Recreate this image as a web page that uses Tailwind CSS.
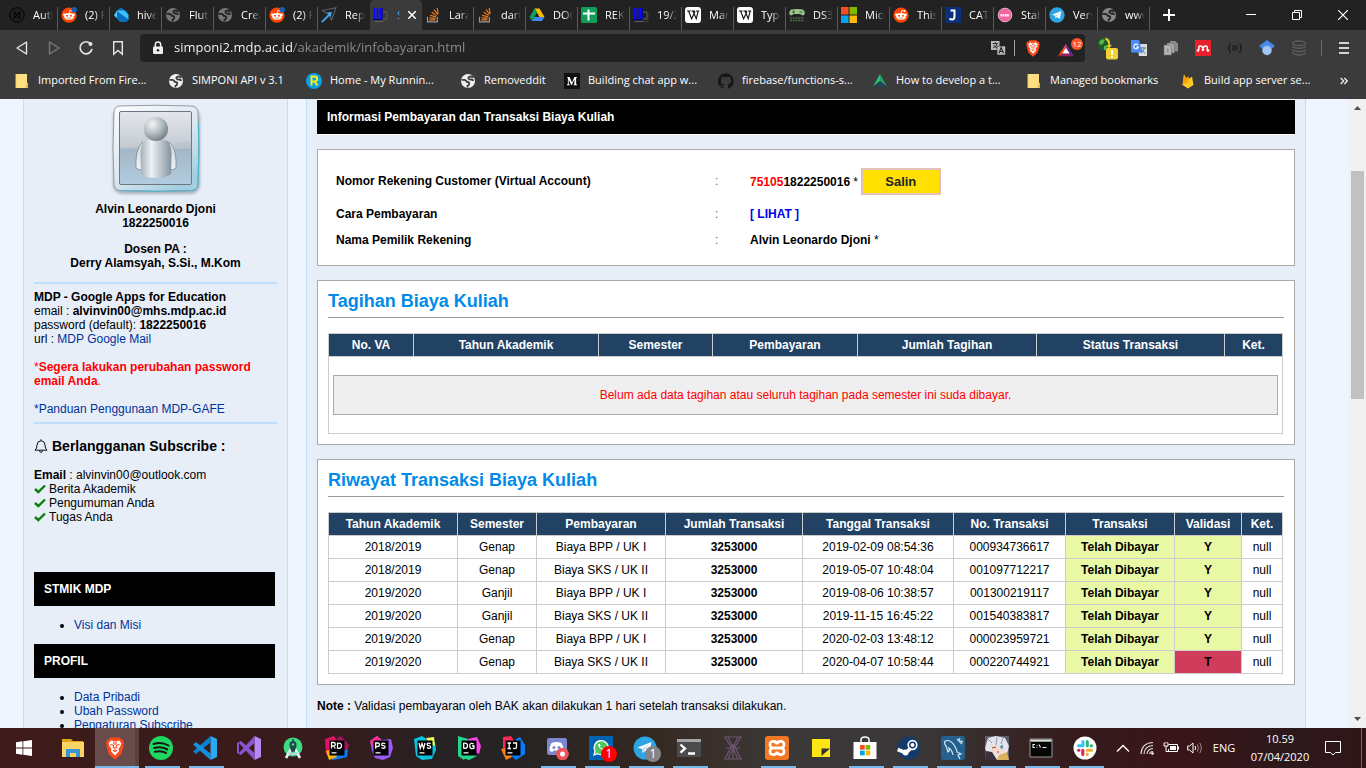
<!DOCTYPE html>
<html lang="id">
<head>
<meta charset="utf-8">
<title>Informasi Pembayaran - SIMPONI</title>
<script src="https://cdn.jsdelivr.net/npm/@tailwindcss/browser@4"></script>
</head>
<body class="flex h-screen flex-col overflow-hidden bg-[#f0f4fd] font-['Liberation_Sans',Arial,sans-serif] text-xs text-black">

<!-- shared icon symbols -->
<svg class="hidden" aria-hidden="true">
  <symbol id="globe" viewBox="0 0 16 16"><circle cx="8" cy="8" r="7" fill="currentColor"/><path d="M1.500 6.800h2.800q1.500.2 2 1.400.4 1 1.900 1 1.300.2 1 1.600-.2 1.500-1.700 2v1.700M13.500 4.500q-2-1.500-4.200-.7-1.600.9-.5 2.100 1 .8 2.700.6 1.500 0 1.500 1.500" fill="none" stroke="var(--cut)" stroke-width="1.800"/></symbol>
  <symbol id="reddit" viewBox="0 0 16 16"><circle cx="8" cy="8.200" r="7.600" fill="#ff4500"/><ellipse cx="8" cy="9.400" rx="4.800" ry="3.300" fill="#fff"/><circle cx="3.400" cy="7.800" r="1.300" fill="#fff"/><circle cx="12.600" cy="7.800" r="1.300" fill="#fff"/><circle cx="6" cy="8.700" r=".95" fill="#ff4500"/><circle cx="10" cy="8.700" r=".95" fill="#ff4500"/><path d="M6 10.800q2 1.200 4 0" fill="none" stroke="#ff4500" stroke-width=".7"/><path d="M8.200 6.200l.7-2.800 2.300.6" fill="none" stroke="#fff" stroke-width=".8"/><circle cx="11.600" cy="4" r=".9" fill="#fff"/></symbol>
  <symbol id="stack" viewBox="0 0 16 16"><path d="M2.500 9.800v5h9.800v-5" fill="none" stroke="#9a9a9a" stroke-width="1.200"/><path d="M4.400 12.900h6M4.500 10.700l6 .7M5.100 8.200l5.800 1.700M6.700 5.300l5 3.300M9 2.600l3.700 4.800M12.200 1l1 5.800" stroke="#f48024" stroke-width="1.100"/></symbol>
  <symbol id="simponi" viewBox="0 0 16 16"><path d="M.5 1h2v11h-2zM3.500 1h2v11h-2zM6.500 1h2v11h-2z" fill="#0a0aff"/><path d="M0 12.500h9M9.200 1v11" fill="none" stroke="#0000a0"/><path d="M10 5h4v7h-4M1.500 14.500h9" fill="none" stroke="#626262"/><path d="M11 14.500h4v-9" fill="none" stroke="#3c3c3c"/></symbol>
  <symbol id="wiki" viewBox="0 0 16 16"><rect width="16" height="16" rx="3" fill="#fff"/><path d="M2 4h3.600M6.400 4H10M11 4h3.200M3.600 4l3 7.800L10 4.600M8 4l3.200 7.800L13.200 4" fill="none" stroke="#111" stroke-width="1.100"/></symbol>
  <symbol id="brave" viewBox="0 0 20 24"><path d="M5.500 1.500h9l2 2 1.500.3 1 3.400-.8 2 .3 1.200-2.500 8L10 23.500l-6-5.100-2.500-8 .3-1.200-.8-2L2 3.800l1.500-.3z" fill="#fb4b1c"/><path d="M6 4.500l4 .8 4-.8 2.200 2.600-.5 2.500-2.200 3.400.5 2.300L10 19.500l-4-4.200.5-2.300-2.200-3.400-.5-2.500z" fill="#fff"/><path d="M5.300 8.500l3 .8.500 1.500-1 1.500M14.700 8.500l-3 .8-.5 1.500 1 1.500M8.500 5.500l1 3M11.500 5.500l-1 3M7.800 14.300l2.200 1.200 2.200-1.200M10 11v3.500" fill="none" stroke="#fb4b1c" stroke-width="1.100"/></symbol>
  <symbol id="folder" viewBox="0 0 16 16"><path d="M2 1h11v9h1v5H2z" fill="#fee083"/><path d="M12 10.500h2V15h-2.500z" fill="#e9bd4a"/><path d="M2 1v14" stroke="#f3ce62"/></symbol>
  <symbol id="telegram" viewBox="0 0 24 24"><circle cx="12" cy="12" r="11.500" fill="#2ca5e0"/><path d="M4.500 11.600L18.500 6l-2.300 12-4.200-3.100-2.300 2.200-.6-4.100z" fill="#fff"/><path d="M9.100 13l7.500-5-5.300 6.300-1.600 2.800z" fill="#b9dcf0"/></symbol>
  <symbol id="check" viewBox="0 0 12 12"><path d="M1 6l3.300 3L11 2.500" fill="none" stroke="#0a820a" stroke-width="2.400"/></symbol>
</svg>

<!-- tab strip -->
<header class="flex h-[30px] shrink-0 bg-[#222] pl-1.5 font-['Open_Sans',sans-serif] text-[11px] text-white">
  <nav aria-label="Tabs" class="flex [&>a]:flex [&>a]:h-[30px] [&>a]:w-[52px] [&>a]:shrink-0 [&>a]:items-center [&>a]:gap-2 [&>a]:pl-[3px] [&>a]:bg-[linear-gradient(#5a5a5a,#5a5a5a)] [&>a]:bg-[length:1px_23px] [&>a]:bg-[position:right_bottom] [&>a]:bg-no-repeat [&_svg]:size-4 [&_svg]:shrink-0 [&_span]:w-5 [&_span]:overflow-hidden [&_span]:whitespace-nowrap [&_span]:mask-r-from-50%">
    <a href="#"><svg viewBox="0 0 16 16"><circle cx="8" cy="8" r="7.300" fill="#1f1f1f" stroke="#050505"/><path d="M4.500 4l7 8M11.500 4l-7 8M5.500 4v8M10.500 4v8" stroke="#050505" stroke-width="1.100"/></svg><span>Auth</span></a>
    <a href="#"><svg viewBox="0 0 16 16"><use href="#reddit"/><circle cx="13.200" cy="2.800" r="2.700" fill="#0d63b8"/></svg><span>(2) Fl</span></a>
    <a href="#"><svg viewBox="0 0 16 16"><path d="M4 3.500L8 .5l6 4 1.500 8-2 2.500H7L1 8.500z" fill="#0b6fc0"/><path d="M4 3.500h7l4.500 4v5L4 4z" fill="#3fc1f5"/><path d="M1 8.500l3-5v7.500z" fill="#55ccf8"/></svg><span>hive</span></a>
    <a href="#"><svg class="text-[#777] [--cut:#222]"><use href="#globe"/></svg><span>Flutt</span></a>
    <a href="#"><svg class="text-[#777] [--cut:#222]"><use href="#globe"/></svg><span>Crea</span></a>
    <a href="#"><svg viewBox="0 0 16 16"><use href="#reddit"/><circle cx="13.200" cy="2.800" r="2.700" fill="#0d63b8"/></svg><span>(2) Fl</span></a>
    <a href="#" class="bg-none!"><svg viewBox="0 0 16 16"><path d="M1.500 3.500L15 .8l-4.500 12-2.500-5z" fill="none" stroke="#59636b" stroke-width="1.100"/><path d="M.8 15.200L9 7" stroke="#46a6ee" stroke-width="1.800"/><path d="M10.800 4.800L5.800 5.800l4 4z" fill="#46a6ee"/></svg><span>Repl</span></a>
    <a href="#" aria-current="page" class="rounded-t bg-[#3b3b3b] bg-none!"><svg><use href="#simponi"/></svg><span class="w-[3px]! text-[#4aa8ff]">S</span><svg class="size-2!" viewBox="0 0 8 8"><path d="M0 0l8 8M8 0L0 8" stroke="#fff" stroke-width="1.500"/></svg></a>
    <a href="#"><svg><use href="#stack"/></svg><span>Lara</span></a>
    <a href="#"><svg><use href="#stack"/></svg><span>dart</span></a>
    <a href="#"><svg viewBox="0 0 16 16"><path d="M5.500 1.500h5l5 8.500h-5z" fill="#fbbc05"/><path d="M5.500 1.500L.5 10 3 14l5-8.500z" fill="#0f9d58"/><path d="M5.500 10h10L13 14H3z" fill="#4285f4"/></svg><span>DOC</span></a>
    <a href="#"><svg viewBox="0 0 16 16"><rect width="16" height="16" rx="1.500" fill="#109d58"/><path d="M7.500 2.500v11M2 6.500h12" stroke="#fff" stroke-width="2"/></svg><span>REKA</span></a>
    <a href="#"><svg><use href="#simponi"/></svg><span>19/2</span></a>
    <a href="#"><svg><use href="#wiki"/></svg><span>Mar</span></a>
    <a href="#"><svg><use href="#wiki"/></svg><span>Type</span></a>
    <a href="#"><svg viewBox="0 0 16 16"><path d="M2 2.500q6-1 12 0 2 1.500 1.500 5l-1.500 1-3-1.500H5L2 8.500.5 7.500Q0 4 2 2.500z" fill="#9cc78b"/><path d="M3 5h3M4.500 3.500v3M10.500 5h3" stroke="#3f6338"/><path d="M1 11h14M1 13.500h14" stroke="#4a6b42" stroke-width="1.500" stroke-dasharray="2 .7"/></svg><span>DS3</span></a>
    <a href="#"><svg viewBox="0 0 16 16"><path d="M0 0h7.500v7.500H0z" fill="#f25022"/><path d="M8.500 0H16v7.500H8.500z" fill="#7fba00"/><path d="M0 8.500h7.500V16H0z" fill="#00a4ef"/><path d="M8.500 8.500H16V16H8.500z" fill="#ffb900"/></svg><span>Micr</span></a>
    <a href="#"><svg><use href="#reddit"/></svg><span>This</span></a>
    <a href="#"><svg viewBox="0 0 16 16"><path d="M0 0h16v16H0z" fill="#0a2f7d"/><path d="M5.500 3.500h5M9.500 3v6.500q0 3-2.500 3-1.500 0-2.500-1" fill="none" stroke="#fff" stroke-width="2"/></svg><span>CATA</span></a>
    <a href="#"><svg viewBox="0 0 16 16"><circle cx="8" cy="8" r="6.800" fill="#f0659f" stroke="#e9b3cb"/><path d="M3.500 8.200h9" stroke="#fff" stroke-width="2.600" stroke-dasharray="1.600 .6"/></svg><span>Stab</span></a>
    <a href="#"><svg><use href="#telegram"/></svg><span>Vers</span></a>
    <a href="#"><svg class="text-[#888] [--cut:#222]"><use href="#globe"/></svg><span>www</span></a>
  </nav>
  <button aria-label="New tab" class="grid w-[38px] place-items-center"><svg class="size-3" viewBox="0 0 12 12"><path d="M6 0v12M0 6h12" stroke="#fff" stroke-width="2"/></svg></button>
  <div class="ml-auto flex [&>button]:grid [&>button]:w-[46px] [&>button]:place-items-center [&_svg]:size-[10px]">
    <button aria-label="Minimize"><svg viewBox="0 0 10 10"><path d="M0 4.500h10" stroke="#fff"/></svg></button>
    <button aria-label="Restore"><svg viewBox="0 0 10 10"><path d="M.5 2.500h7v7h-7zM2.500 2.500v-2h7v7h-2" fill="none" stroke="#fff"/></svg></button>
    <button aria-label="Close window"><svg viewBox="0 0 10 10"><path d="M0 0l10 10M10 0L0 10" stroke="#fff" stroke-width="1.200"/></svg></button>
  </div>
</header>

<!-- toolbar -->
<div class="flex h-8 shrink-0 items-center bg-[#3b3b3b] px-1.5 pt-1 font-['Open_Sans',sans-serif] text-white [&>button]:grid [&>button]:h-7 [&>button]:w-8 [&>button]:shrink-0 [&>button]:place-items-center">
  <button aria-label="Back"><svg class="size-4" viewBox="0 0 16 16"><path d="M12.500 2v12L3 8z" fill="none" stroke="#e6e6e6" stroke-width="1.400" stroke-linejoin="round"/></svg></button>
  <button aria-label="Forward"><svg class="size-4" viewBox="0 0 16 16"><path d="M3.500 2v12L13 8z" fill="none" stroke="#7a7a7a" stroke-width="1.400" stroke-linejoin="round"/></svg></button>
  <button aria-label="Reload"><svg class="size-4" viewBox="0 0 16 16"><path d="M12.800 4A6 6 0 1 0 14 9" fill="none" stroke="#e6e6e6" stroke-width="1.700"/><circle cx="12.500" cy="4" r="2" fill="#e6e6e6"/></svg></button>
  <button aria-label="Bookmark"><svg class="size-4" viewBox="0 0 16 16"><path d="M3.700 1.700h8.600v12.500L8 10.500l-4.300 3.700z" fill="none" stroke="#e6e6e6" stroke-width="1.400"/></svg></button>
  <div class="mx-1.5 flex h-7 min-w-0 flex-1 items-center rounded bg-[#222] pl-3">
    <svg class="mr-2.5 h-3.5 w-3 shrink-0" viewBox="0 0 12 14"><path d="M3.300 6V3.700a2.700 2.700 0 0 1 5.400 0V6" fill="none" stroke="#eee" stroke-width="1.500"/><rect x="1" y="5.500" width="10" height="7.500" rx="1" fill="#eee"/><circle cx="6" cy="9.200" r="1.200" fill="#222"/></svg>
    <input aria-label="Address" value="simponi2.mdp.ac.id/akademik/infobayaran.html" class="min-w-0 flex-1 bg-[linear-gradient(to_right,#fff_119px,#8f8f8f_119px)] bg-clip-text text-[13px] text-transparent outline-none">
    <button aria-label="Translate page" class="mr-2"><svg class="size-4" viewBox="0 0 16 16"><path d="M1 1h8.500v9H1z" fill="#bcbcbc"/><path d="M2.500 3.500h5.500M5.200 2v1.500M3 8q3.500-1.500 4-4.500M3.500 5q1.500 2.500 4 3" stroke="#222" fill="none" stroke-width=".9"/><path d="M7 6h8.500v9H7z" fill="#bcbcbc" stroke="#222" stroke-width=".6"/><path d="M9 13.200l2.200-5.700 2.300 5.700M9.800 11.500h2.900" fill="none" stroke="#222" stroke-width="1.100"/></svg></button>
    <div class="h-4 w-px bg-[#a0a0a0]"></div>
    <button aria-label="Brave Shields" class="ml-2.5"><svg class="h-[18px] w-4" viewBox="0 0 20 24"><use href="#brave"/></svg></button>
    <button aria-label="Brave Rewards, 12" class="relative mr-2 ml-4 h-7 w-5"><svg class="mt-1 h-4 w-[18px]" viewBox="0 0 20 16"><path d="M10 1L1 15l9-5z" fill="#ff4724"/><path d="M1 15h18l-9-4z" fill="#9e1f63"/><path d="M10 1l9 14-9-4z" fill="#662d91"/><path d="M10 5.500l4 6.500H6z" fill="#fff"/></svg><span class="absolute top-1 -right-1.5 grid size-3 place-items-center rounded-full bg-[#fb542b] text-[8px] leading-none">12</span></button>
  </div>
  <button aria-label="Download manager"><svg class="h-6 w-[22px]" viewBox="0 0 22 24"><circle cx="8" cy="8" r="6.500" fill="#1d5a2c"/><path d="M3 6q3-4 6-2l-2 4-3 1zM8 10l4-1-2 5H8z" fill="#57b848"/><path d="M10 1.500q5 2 4 7.500l2-.3-3 4-2.500-3.500 1.800.1q0-4-3.300-6z" fill="#e6c61f"/><rect x="10" y="12" width="12" height="11.500" rx="2" fill="#f2d230"/><path d="M16 14v5M16 20v2" stroke="#fff" stroke-width="1.800"/></svg></button>
  <button aria-label="Google Translate"><svg class="size-4" viewBox="0 0 16 16"><path d="M6 4h10v12H8z" fill="#dcdcdc"/><path d="M9 8h6M12 7v1M9.500 13q3.500-2 4-5M10.500 9.500q1.500 3 4 4" stroke="#607d8b" fill="none"/><path d="M0 0h8l3.500 12.500H1L0 12z" fill="#4b8bf4"/><path d="M7 5.200A2.300 2.300 0 1 0 7.300 7H5" fill="none" stroke="#fff" stroke-width="1.100"/></svg></button>
  <button aria-label="Copy tabs"><svg class="size-4" viewBox="0 0 16 16"><path d="M7 1h5l3 2.500v8H7z" fill="#8b8b8b"/><path d="M4 3h5l2.500 2.500V13H4z" fill="#a4a4a4" stroke="#6c6c6c" stroke-width=".6"/><path d="M1 5h5l2.500 2.500V15H1z" fill="#b5b5b5" stroke="#6c6c6c" stroke-width=".6"/><path d="M4.800 8.500v4" stroke="#777"/></svg></button>
  <button aria-label="Mendeley"><svg class="size-4" viewBox="0 0 16 16"><path d="M0 0h16v16H0z" fill="#e8202e"/><path d="M3.800 10.200V7.300q.2-1.800 2-1.300Q7.600 6.800 8 8q.4-1.200 2.200-2 1.800-.5 2 1.300v2.900" fill="none" stroke="#fff" stroke-width="1.500"/><circle cx="3" cy="10.500" r="1.300" fill="#fff"/><circle cx="8" cy="9.800" r="1.300" fill="#fff"/><circle cx="13" cy="10.500" r="1.300" fill="#fff"/></svg></button>
  <button aria-label="JSON viewer"><svg class="size-4" viewBox="0 0 16 16"><path d="M4 3.500q-1.500 0-1.500 2T1.300 8q1.200.5 1.200 2.500t1.500 2M12 3.500q1.500 0 1.500 2T14.700 8q-1.200.5-1.200 2.500t-1.500 2M5 6h6M5 8h6M5 10h6" fill="none" stroke="#181818" stroke-width="1.200"/></svg></button>
  <button aria-label="Google Scholar"><svg class="size-4" viewBox="0 0 16 16"><path d="M8 0l8 6-3.500 3h-9L0 6z" fill="#4a89e8"/><circle cx="8" cy="10.500" r="4.700" fill="#a3c6f9"/></svg></button>
  <button aria-label="Database"><svg class="size-4" viewBox="0 0 16 16"><g fill="none" stroke="#5c5c5c" stroke-width="1.400"><ellipse cx="8" cy="3.300" rx="6.500" ry="2.300"/><path d="M1.500 6q1 2.300 6.500 2.300T14.500 6M1.500 9.300q1 2.300 6.500 2.300t6.500-2.300M1.500 12.300q1 2.700 6.500 2.700t6.500-2.700"/></g></svg></button>
  <div class="ml-1.5 h-4 w-px shrink-0 bg-[#6a6a6a]"></div>
  <button aria-label="Menu" class="ml-1.5"><svg class="h-3.5 w-[10px]" viewBox="0 0 10 14"><path d="M0 2h10M0 7h10M0 12h10" stroke="#d4d4d4" stroke-width="2"/></svg></button>
</div>

<!-- bookmarks -->
<nav aria-label="Bookmarks" class="flex h-[37px] shrink-0 items-center bg-[#3b3b3b] pl-3.5 font-['Open_Sans',sans-serif] text-[11px] text-white [&>a]:flex [&>a]:w-[154px] [&>a]:shrink-0 [&>a]:items-center [&>a]:gap-2 [&>a]:whitespace-nowrap [&>a>svg]:size-4 [&_svg]:shrink-0">
  <a href="#"><svg><use href="#folder"/></svg>Imported From Fire...</a>
  <a href="#" class="w-[138px]!"><svg class="text-[#f0f0f0] [--cut:#3b3b3b]"><use href="#globe"/></svg>SIMPONI API v 3.1</a>
  <a href="#"><svg viewBox="0 0 16 16"><circle cx="8" cy="8" r="8" fill="#0b9fe8"/><path d="M5.500 12.500v-9H9q2.200.3 2.200 2.400T9 8.400H5.500M8.500 8.400l3 4.100" fill="none" stroke="#f7ef1a" stroke-width="2"/></svg>Home - My Runnin...</a>
  <a href="#" class="w-[104px]!"><svg class="text-[#f0f0f0] [--cut:#3b3b3b]"><use href="#globe"/></svg>Removeddit</a>
  <a href="#"><svg viewBox="0 0 16 16"><path d="M0 0h16v16H0z" fill="#111"/><path d="M3 4h2.500L8 9.500 10.400 4H13v.6l-.9.500v6l.9.600v.5H9.500v-.5l.9-.6V6.300l-2.700 5.900h-.3L4.700 6.500v4.300l1 1v.4H2.900v-.4l1-1V5.300z" fill="#fff"/></svg>Building chat app w...</a>
  <a href="#"><svg viewBox="0 0 16 16"><path d="M8 .2a8 8 0 0 0-2.500 15.600c.4.100.5-.2.500-.4v-1.500c-2.200.5-2.700-1-2.700-1-.4-.9-.9-1.200-.9-1.200-.7-.5.1-.5.100-.5.800.1 1.200.8 1.200.8.700 1.300 1.900.9 2.300.7.100-.5.300-.9.500-1.100-1.800-.2-3.600-.9-3.600-4 0-.9.300-1.600.8-2.100-.1-.2-.4-1 .1-2.100 0 0 .7-.2 2.200.8a7.500 7.500 0 0 1 4 0c1.500-1 2.200-.8 2.200-.8.4 1.100.2 1.900.1 2.100.5.600.8 1.300.8 2.100 0 3.100-1.900 3.800-3.700 4 .3.300.6.800.6 1.500v2.200c0 .2.100.5.500.4A8 8 0 0 0 8 .2" fill="#15181b"/></svg>firebase/functions-s...</a>
  <a href="#"><svg viewBox="0 0 16 16"><path d="M8 1l7 12.500L8 8z" fill="#1da462"/><path d="M8 1L1 13.500 8 8z" fill="#2bbf74"/><path d="M8 8.500l7 5H1z" fill="#21425a"/></svg>How to develop a t...</a>
  <a href="#"><svg><use href="#folder"/></svg>Managed bookmarks</a>
  <a href="#"><svg viewBox="0 0 16 16"><path d="M2.500 12L4 1.500l2.700 4.200L8 3.500l1.500 2.300L12 3.500 13.500 12 8 15.500z" fill="#ffca28"/><path d="M2.500 12L4 1.500l4 7.500zM2.500 12L8 3.500l1.600 2.400z" fill="#ffa000"/></svg>Build app server se...</a>
  <button aria-label="More bookmarks" class="mr-[18px] ml-auto"><svg class="size-2" viewBox="0 0 8 8"><path d="M.7 1l3 3-3 3M4.300 1l3 3-3 3" fill="none" stroke="#eee" stroke-width="1.300"/></svg></button>
</nav>

<!-- web page -->
<div class="flex min-h-0 flex-1">
  <div class="flex min-w-0 flex-1 overflow-hidden bg-[#f0f4fd] pr-[43px] pl-[23px]">

    <aside class="w-[265px] shrink-0 border-x border-[#bfdffb] bg-[#e7eef8] px-2.5 leading-[14px] [&_a]:text-[#003399]">
      <svg class="mx-auto mt-1 size-24" viewBox="0 0 96 96" role="img" aria-label="Foto profil">
        <defs>
          <linearGradient id="frame" x1="0" y1="0" x2=".7" y2="1"><stop offset="0" stop-color="#fdfdfe"/><stop offset=".6" stop-color="#dbe6ee"/><stop offset="1" stop-color="#a5cfe0"/></linearGradient>
          <linearGradient id="glass" x1="0" y1="0" x2="0" y2="1"><stop offset="0" stop-color="#e4e6ec"/><stop offset=".5" stop-color="#c3c9d1"/><stop offset=".52" stop-color="#a9b9c7"/><stop offset="1" stop-color="#b9d4e6"/></linearGradient>
          <radialGradient id="head" cx=".35" cy=".3" r=".75"><stop offset="0" stop-color="#f4f6f7"/><stop offset=".5" stop-color="#b9c1c7"/><stop offset="1" stop-color="#6f7d87"/></radialGradient>
          <linearGradient id="torso"><stop offset="0" stop-color="#a3b0b9"/><stop offset=".35" stop-color="#eff2f4"/><stop offset="1" stop-color="#84929d"/></linearGradient>
          <linearGradient id="arm" x1="0" y1="0" x2="0" y2="1"><stop offset="0" stop-color="#d0d7dc"/><stop offset="1" stop-color="#eef2f5"/></linearGradient>
          <filter id="soft"><feGaussianBlur stdDeviation="1.600"/></filter>
        </defs>
        <rect x="5" y="5" width="87" height="86" rx="9" fill="#7d8794" opacity=".6" filter="url(#soft)"/>
        <path d="M11 3Q48 1.500 84 3q5 .5 6 6 1.500 36 0 73-.7 5-6 5.500Q48 89 12 87.500q-5-.5-6-5.500-2-37 0-73 .5-5.500 5-6z" fill="url(#frame)" stroke="#929ca6"/>
        <path d="M90.500 20Q91.500 52 90 82q-.7 5-6 5.500Q48 89 12 87.500" fill="none" stroke="#4fb6cf" stroke-width="1.200"/>
        <rect x="11.500" y="8.500" width="72" height="73" rx="1.500" fill="url(#glass)" stroke="#6d767f"/>
        <path d="M11.500 45q36-2 72-7v43h-72z" fill="#8eabc2" opacity=".18"/>
        <path d="M35 39q-5 4-6.500 13-1 7-.5 13 3 3 6.500 1l2-18zM61 39q5 4 6.500 13 1 7 .5 13-3 3-6.500 1l-2-18z" fill="url(#arm)" stroke="#88959f"/>
        <path d="M36 38q12-5 24 0 4 6 3.500 15L63 71q-5 4-15 4t-15-4l-.5-18Q32 44 36 38z" fill="url(#torso)"/>
        <circle cx="48" cy="26" r="12" fill="url(#head)"/>
      </svg>
      <p class="mt-[3px] text-center font-bold">Alvin Leonardo Djoni<br>1822250016</p>
      <p class="mt-3 text-center font-bold">Dosen PA :<br>Derry Alamsyah, S.Si., M.Kom</p>
      <hr class="mt-3 mb-1.5 border-t-2 border-[#bfdffb]">
      <p><b>MDP - Google Apps for Education</b><br>email : <b>alvinvin00@mhs.mdp.ac.id</b><br>password (default): <b>1822250016</b><br>url : <a href="#">MDP Google Mail</a></p>
      <p class="mt-3.5 text-[#f00]">*<b>Segera lakukan perubahan password email Anda</b>.</p>
      <p class="mt-3.5"><a href="#">*Panduan Penggunaan MDP-GAFE</a></p>
      <hr class="mt-1.5 mb-3.5 border-t-2 border-[#bfdffb]">
      <h2 class="flex items-center gap-1 text-sm leading-4 font-bold"><svg class="size-3.5" viewBox="0 0 14 14"><path d="M1 11.200q2-1.600 2-5.200Q3.200 2 7 1.700 10.800 2 11 6q0 3.600 2 5.200zM7 .3v1.400M5.500 11.500q0 1.800 1.500 1.800t1.500-1.800" fill="none" stroke="#111"/></svg>Berlangganan Subscribe :</h2>
      <p class="mt-3.5"><b>Email</b> : alvinvin00@outlook.com</p>
      <ul class="[&>li]:flex [&>li]:items-center [&>li]:gap-[3px] [&_svg]:size-3">
        <li><svg><use href="#check"/></svg>Berita Akademik</li>
        <li><svg><use href="#check"/></svg>Pengumuman Anda</li>
        <li><svg><use href="#check"/></svg>Tugas Anda</li>
      </ul>
      <h3 class="mt-12 mr-0.5 bg-black px-2.5 py-2.5 font-bold text-white">STMIK MDP</h3>
      <ul class="my-3 list-disc pl-10"><li><a href="#">Visi dan Misi</a></li></ul>
      <h3 class="mr-0.5 bg-black px-2.5 py-2.5 font-bold text-white">PROFIL</h3>
      <ul class="mt-3 list-disc pl-10"><li><a href="#">Data Pribadi</a></li><li><a href="#">Ubah Password</a></li><li><a href="#">Pengaturan Subscribe</a></li></ul>
    </aside>

    <main class="ml-[18px] min-w-0 flex-1 border-x border-[#bfdffb] bg-[#e7eef8] px-2.5">
      <h1 class="border-y border-white bg-black px-2.5 text-xs leading-[34px] font-bold text-white">Informasi Pembayaran dan Transaksi Biaya Kuliah</h1>

      <section class="mt-3.5 border border-[#aaa] bg-white px-[18px] pt-[18px] pb-3 font-bold">
        <dl class="grid grid-cols-[379fr_35fr_526fr] leading-[26px]">
          <dt>Nomor Rekening Customer (Virtual Account)</dt><dd class="font-normal text-[#666]">:</dd>
          <dd class="mb-1.5 flex items-center"><span class="text-[#f00]">75105</span>1822250016<span class="mx-[3px] font-normal">*</span><button class="h-[27px] w-20 border-2 border-[#e2c2b8] bg-[#ffe000] text-[13px] leading-none font-bold text-[#222]">Salin</button></dd>
          <dt>Cara Pembayaran</dt><dd class="font-normal text-[#666]">:</dd><dd><a href="#" class="text-[#0000ee]">[ LIHAT ]</a></dd>
          <dt>Nama Pemilik Rekening</dt><dd class="font-normal text-[#666]">:</dd><dd>Alvin Leonardo Djoni <span class="font-normal">*</span></dd>
        </dl>
      </section>

      <section class="mt-3.5 border border-[#aaa] bg-white px-2.5 pb-2.5">
        <h2 class="mb-[15px] border-b border-[#999] pt-1 text-lg leading-8 font-bold text-[#008be8]">Tagihan Biaya Kuliah</h2>
        <table class="w-[calc(100%-1px)] table-fixed border-collapse text-center [&_td]:border [&_td]:border-[#ccc] [&_th]:h-[23px] [&_th]:border [&_th]:border-[#ccc] [&_th]:bg-[#224264] [&_th]:text-white">
          <colgroup><col class="w-[85px]"><col class="w-[185px]"><col class="w-[114px]"><col class="w-[145px]"><col class="w-[179px]"><col class="w-[188px]"><col class="w-[58px]"></colgroup>
          <thead><tr><th>No. VA</th><th>Tahun Akademik</th><th>Semester</th><th>Pembayaran</th><th>Jumlah Tagihan</th><th>Status Transaksi</th><th>Ket.</th></tr></thead>
          <tbody><tr><td colspan="7" class="px-1 py-[18px]"><p class="border border-[#aaa] bg-[#efefef] leading-[38px] text-[#f00]">Belum ada data tagihan atau seluruh tagihan pada semester ini suda dibayar.</p></td></tr></tbody>
        </table>
      </section>

      <section class="mt-3.5 border border-[#aaa] bg-white px-2.5 pb-2.5">
        <h2 class="mb-[15px] border-b border-[#999] pt-1 text-lg leading-8 font-bold text-[#008be8]">Riwayat Transaksi Biaya Kuliah</h2>
        <table class="w-[calc(100%-1px)] table-fixed border-collapse text-center [&_td]:h-[23px] [&_td]:border [&_td]:border-[#ccc] [&_td:nth-child(4)]:font-bold [&_td:nth-child(7)]:bg-[#e9f8a5] [&_td:nth-child(7)]:font-bold [&_td:nth-child(8)]:bg-[#e9f8a5] [&_td:nth-child(8)]:font-bold [&_th]:h-[23px] [&_th]:border [&_th]:border-[#ccc] [&_th]:bg-[#224264] [&_th]:text-white">
          <colgroup><col class="w-[129px]"><col class="w-[79px]"><col class="w-[129px]"><col class="w-[137px]"><col class="w-[151px]"><col class="w-[112px]"><col class="w-[109px]"><col class="w-[67px]"><col class="w-[41px]"></colgroup>
          <thead><tr><th>Tahun Akademik</th><th>Semester</th><th>Pembayaran</th><th>Jumlah Transaksi</th><th>Tanggal Transaksi</th><th>No. Transaksi</th><th>Transaksi</th><th>Validasi</th><th>Ket.</th></tr></thead>
          <tbody>
            <tr><td>2018/2019</td><td>Genap</td><td>Biaya BPP / UK I</td><td>3253000</td><td>2019-02-09 08:54:36</td><td>000934736617</td><td>Telah Dibayar</td><td>Y</td><td>null</td></tr>
            <tr><td>2018/2019</td><td>Genap</td><td>Biaya SKS / UK II</td><td>3253000</td><td>2019-05-07 10:48:04</td><td>001097712217</td><td>Telah Dibayar</td><td>Y</td><td>null</td></tr>
            <tr><td>2019/2020</td><td>Ganjil</td><td>Biaya BPP / UK I</td><td>3253000</td><td>2019-08-06 10:38:57</td><td>001300219117</td><td>Telah Dibayar</td><td>Y</td><td>null</td></tr>
            <tr><td>2019/2020</td><td>Ganjil</td><td>Biaya SKS / UK II</td><td>3253000</td><td>2019-11-15 16:45:22</td><td>001540383817</td><td>Telah Dibayar</td><td>Y</td><td>null</td></tr>
            <tr><td>2019/2020</td><td>Genap</td><td>Biaya BPP / UK I</td><td>3253000</td><td>2020-02-03 13:48:12</td><td>000023959721</td><td>Telah Dibayar</td><td>Y</td><td>null</td></tr>
            <tr><td>2019/2020</td><td>Genap</td><td>Biaya SKS / UK II</td><td>3253000</td><td>2020-04-07 10:58:44</td><td>000220744921</td><td>Telah Dibayar</td><td class="bg-[#d03c5c]!">T</td><td>null</td></tr>
          </tbody>
        </table>
      </section>
      <p class="mt-3.5 leading-[14px]"><b>Note :</b> Validasi pembayaran oleh BAK akan dilakukan 1 hari setelah transaksi dilakukan.</p>
    </main>
  </div>

  <!-- page scrollbar -->
  <div class="flex w-[17px] shrink-0 flex-col items-center bg-[#f1f1f1]">
    <svg class="h-[17px] w-[9px]" viewBox="0 0 9 17"><path d="M1 11l3.500-4L8 11z" fill="#505050"/></svg>
    <div class="flex w-[13px] flex-1 flex-col"><div class="flex-[55]"></div><div class="flex-[228] bg-[#c1c1c1]"></div><div class="flex-[312]"></div></div>
    <svg class="h-[17px] w-[9px]" viewBox="0 0 9 17"><path d="M1 6l3.500 4L8 6z" fill="#505050"/></svg>
  </div>
</div>

<!-- taskbar -->
<footer class="flex h-10 shrink-0 bg-[linear-gradient(to_right,#3f1b1b_0%,#371b1c_24%,#272223_32%,#262424_38%,#342721_47%,#3a302b_52%,#3a3938_58%,#3a3838_67%,#351c1d_78%,#3a1418_86%,#2c181b_94%,#301518_100%)] font-['Open_Sans',sans-serif] text-white">
  <button aria-label="Start" class="mr-[3px] grid w-12 place-items-center"><svg class="size-4" viewBox="0 0 16 16"><path d="M0 2.200l6.500-.9v6.300H0zM7.300 1.200L16 0v7.600H7.300zM0 8.400h6.500v6.300L0 13.800zM7.300 8.400H16V16l-8.700-1.200z" fill="#fff"/></svg></button>
  <div class="flex [&>button]:relative [&>button]:grid [&>button]:w-11 [&>button]:place-items-center [&>button>svg]:size-6 [&>button>i]:absolute [&>button>i]:bottom-0 [&>button>i]:left-[6px] [&>button>i]:h-0.5 [&>button>i]:w-[35px] [&>button>i]:bg-[#76b9ed]">
    <button aria-label="File Explorer"><svg viewBox="0 0 24 24"><path d="M1 3h9l2 2h10v4H1z" fill="#e0a31a"/><path d="M1 6h22v15H1z" fill="#fcd462"/><path d="M5 21v-8h14v8h-4v-4H9v4z" fill="#3a95d8"/></svg></button>
    <button aria-label="Brave" class="border-r-4 border-[#5d3f3f] bg-[#684c4c]"><svg><use href="#brave"/></svg><i class="left-0! w-11!"></i></button>
    <button aria-label="Spotify"><svg viewBox="0 0 24 24"><circle cx="12" cy="12" r="12" fill="#1ed760"/><path d="M4.500 8q8-2.400 15 1.500M5.200 12q7-2 13 1.400M6 15.700q6-1.500 11 1.200" fill="none" stroke="#191414" stroke-width="2" stroke-linecap="round"/></svg><i></i></button>
    <button aria-label="Visual Studio Code"><svg viewBox="0 0 24 24"><path d="M17.500 0L24 3v18l-6.500 3z" fill="#2aa9f3"/><path d="M17.500 0v6.500L3 18l-3-2.500z" fill="#0a7fce"/><path d="M17.500 24v-6.500L3 6 0 8.500z" fill="#1491dd"/></svg><i></i></button>
    <button aria-label="Visual Studio"><svg viewBox="0 0 24 24"><path d="M17.500 0L24 3v18l-6.500 3z" fill="#b889f0"/><path d="M17.500 0v7L4 19l-4-2V7l4-2 13.500 12v7L2 7v10z" fill="#8b53cf"/><path d="M2.500 8.500v7L6 12z" fill="#371b1c"/></svg></button>
    <button aria-label="Android Studio"><svg viewBox="0 0 24 24"><circle cx="12" cy="11" r="9.500" fill="#3ddc84"/><path d="M10.500 12L5 22M13.500 12L19 22" stroke="#e8f0f4" stroke-width="2.600"/><path d="M6.500 16q5.500 4 11 0" fill="none" stroke="#c5d9df" stroke-width="1.800"/><circle cx="12" cy="8.500" r="3.500" fill="#1c4a4a"/><path d="M12 3v4M9.500 11h5l-1.500 4h-2z" stroke="#1c4a4a" stroke-width="1.500" fill="#1c4a4a"/><circle cx="12" cy="8.500" r="1.200" fill="#65cfa0"/></svg></button>
    <button aria-label="Rider"><svg viewBox="0 0 24 24"><path d="M0 3l9-3 5 8-6 15-7-5z" fill="#dd1265"/><path d="M12 2l4-2 8 9-3 8-8-2z" fill="#a6145f"/><path d="M6 16l8 1 9-4-1 8-8 2-7 1z" fill="#087cfa"/><path d="M1 15l7-2 4 8-8 3z" fill="#fdb60d"/><path d="M4.500 4.500h15v15h-15z"/><path d="M6.500 12.500v-6h2.300q1.500.2 1.500 1.700T8.800 10H6.500M8.800 10l1.500 2.500M12.500 7.200v5q4 .6 4-2.500t-4-2.500zM6.500 16.800h5" fill="none" stroke="#fff" stroke-width="1.300"/></svg></button>
    <button aria-label="PhpStorm"><svg viewBox="0 0 24 24"><path d="M1 5l7-5 5 4 9-1 2 9-3 9-7 3-8-2L3 15z" fill="#9a5bf5"/><path d="M1 5l7-5 5 5-9 6z" fill="#ff318c"/><path d="M4.500 4.500h15v15h-15z"/><path d="M6.700 12.800V7h2.200q1.600.2 1.600 1.800T8.900 10.500H6.700M16.200 7.700q-3.500-1.300-3.500.7 0 1.200 1.800 1.300 1.800.2 1.700 1.400-.5 2-3.800.6M6.500 16.800h5" fill="none" stroke="#fff" stroke-width="1.300"/></svg></button>
    <button aria-label="WebStorm"><svg viewBox="0 0 24 24"><path d="M1 3l8-3 6 4 7 2 1 8-4 9-10 1-6-4z" fill="#07c3dd"/><path d="M13 2l8-1 1 9-5-2z" fill="#fcf84a"/><path d="M4.500 4.500h15v15h-15z"/><path d="M6 7l1.300 5.500L9 7.500l1.600 5L12 7M17.700 7.700q-3.500-1.300-3.500.7 0 1.200 1.800 1.300 1.800.2 1.700 1.400-.5 2-3.800.6M6.500 16.800h5" fill="none" stroke="#fff" stroke-width="1.300"/></svg></button>
    <button aria-label="DataGrip"><svg viewBox="0 0 24 24"><path d="M1 0l10 3 3 9-7 12-6-4z" fill="#22d88f"/><path d="M11 3l9-2 4 9-2 8-8-4z" fill="#ff45ed"/><path d="M3 15l12 2 5 3-8 4-9-3z" fill="#22d88f"/><path d="M4.500 4.500h15v15h-15z"/><path d="M6.700 7.200v5q3.800.6 3.800-2.500T6.700 7.200zM16.800 8q-4-2-4 1.900t4.200 2.200V10h-2M6.500 16.800h5" fill="none" stroke="#fff" stroke-width="1.300"/></svg></button>
    <button aria-label="IntelliJ IDEA"><svg viewBox="0 0 24 24"><path d="M2 1l8-1 4 6-3 9-9 2z" fill="#fe2857"/><path d="M15 3l4-2 5 8v9l-9 6-6-5z" fill="#087cfa"/><path d="M0 13l6-1 5 9-6 3z" fill="#fc801d"/><path d="M4.500 4.500h15v15h-15z"/><path d="M6.500 7h3.500M8.200 7v5.500M6.500 12.500H10M12 7h3.500v4q-.2 1.700-1.800 1.600l-1.500-.4M6.500 16.800h5" fill="none" stroke="#fff" stroke-width="1.300"/></svg></button>
    <button aria-label="Discord"><svg viewBox="0 0 24 24"><path d="M4 2h16q2 0 2 2v18l-4-3H4q-2 0-2-2V4q0-2 2-2z" fill="#7a87cc"/><path d="M6.500 7q5-2 10 0 2.500 4 2 8l-3 1-1-1.500h-6l-1 1.500-3-1q-.5-4 2-8z" fill="#fff"/><circle cx="9" cy="11.500" r="1.500" fill="#7a87cc"/><circle cx="14" cy="11.500" r="1.500" fill="#7a87cc"/><circle cx="17.500" cy="18" r="6.300" fill="#ee5458"/><circle cx="17.500" cy="18" r="2.500" fill="#fff"/></svg><i></i></button>
    <button aria-label="WhatsApp, 1"><svg viewBox="0 0 24 24"><path d="M0 0h24v24H0z" fill="#0063b1"/><path d="M5 19l1-4a7 7 0 1 1 2.600 2.700z" fill="#4cc95d" stroke="#fff" stroke-width="1.300"/><path d="M9 8.500q1 4.500 5.500 6l1.300-1.500-2-1-1 .8q-1.500-.8-2-2.300l.8-1-.8-1.700z" fill="#fff"/></svg><span class="absolute right-1.5 bottom-1.5 grid size-4 place-items-center rounded-full bg-[#f00] text-xs leading-none">1</span><i></i></button>
    <button aria-label="Telegram, 1"><svg><use href="#telegram"/></svg><span class="absolute right-1.5 bottom-1.5 grid size-4 place-items-center rounded-full bg-[#858585] text-xs leading-none">1</span><i></i></button>
    <button aria-label="Terminal"><svg viewBox="0 0 24 24"><path d="M0 3h24v18H0z" fill="#4b4b4b"/><path d="M0 3h24v3H0z" fill="#a5a5a5"/><path d="M3.500 8.500L8 12.500l-4.500 4.200M11 17.500h7" fill="none" stroke="#fff" stroke-width="2.300"/></svg><i></i></button>
    <button aria-label="XSplit"><svg viewBox="0 0 24 24"><path d="M3 1h18M3 23h18M4 1l6 10-6 12M20 1l-6 10 6 12M7 1l10 22M17 1L7 23M12 8v15M5 12h14" fill="none" stroke="#6b5573" stroke-width="1.200"/></svg></button>
    <button aria-label="XAMPP"><svg viewBox="0 0 24 24"><rect width="24" height="24" rx="3" fill="#f37623"/><path d="M9.500 12Q5 12.500 5 8.500 5 5 9 5.500q3 .5 3 3 0-3 3-3 4-.5 4 3 0 4-4.500 3.500 4.500-.5 4.500 3.500 0 3.500-4 3-3-.5-3-3 0 3-3 3-4 .5-4-3 0-4 4.500-3.500zM9.500 12h5" fill="none" stroke="#fff" stroke-width="2.800"/></svg><i></i></button>
    <button aria-label="Sticky Notes"><svg viewBox="0 0 24 24"><path d="M3 3h18v18H3z" fill="#ffe512"/><path d="M12.500 20v-7.500H21z" fill="#333"/></svg></button>
    <button aria-label="Microsoft Store"><svg viewBox="0 0 24 24"><path d="M8 7V4q0-3 4-3t4 3v3" fill="none" stroke="#fff" stroke-width="1.500"/><path d="M.5 6h23v17h-23z" fill="#fff"/><path d="M7 9h4.700v4.700H7z" fill="#f25022"/><path d="M12.600 9h4.700v4.700h-4.700z" fill="#7fba00"/><path d="M7 14.600h4.700v4.700H7z" fill="#00a4ef"/><path d="M12.600 14.600h4.700v4.700h-4.700z" fill="#ffb900"/></svg><i></i></button>
    <button aria-label="Steam"><svg viewBox="0 0 24 24"><circle cx="12" cy="12" r="11.500" fill="#133a68"/><path d="M.7 13.500l8 3.200 6-5" stroke="#fff" stroke-width="3.600" fill="none"/><circle cx="15.500" cy="9" r="4.300" fill="#133a68" stroke="#fff" stroke-width="1.700"/><circle cx="15.500" cy="9" r="2" fill="#fff"/><circle cx="8.500" cy="16.500" r="3" fill="#fff"/></svg><i></i></button>
    <button aria-label="MySQL Workbench"><svg viewBox="0 0 24 24"><rect width="24" height="24" rx="2.500" fill="#24618f"/><path d="M4 5q5-2 9 4 3 5 3 7l4 2-3 1 2 4M4 5q-1 3 1 5l2 6q2-1 1-4 3 2 4 7" fill="none" stroke="#dce8f0" stroke-width="1.200"/><path d="M16 3l5 5M18.500 2v3.500H22" stroke="#c8d9e5" stroke-width="1.400" fill="none"/></svg><i></i></button>
    <button aria-label="Game"><svg viewBox="0 0 24 24"><path d="M0 0h24v24H0z" fill="#5d5d68"/><path d="M3 2l8-2 9 2 4 8-3 12-9 2-9-3-3-9z" fill="#e4e6ef"/><path d="M6 8l6 2 7-2 1 6-6 5-7-3z" fill="#f7d9cb"/><path d="M15 10l3-1v3l-2 1z" fill="#3699d1"/><path d="M7 12l4-1M12 16h2" stroke="#7e4f4f"/><path d="M1 15l6 1 5 8H0z" fill="#3b3338"/><path d="M14 19l8-3 2 8H12z" fill="#ddb35c"/><path d="M12 1l-1 8M18 2l-2 6M3 3l4 4" stroke="#9197aa"/></svg><i></i></button>
    <button aria-label="Command Prompt"><svg viewBox="0 0 24 24"><path d="M1 3h22v18H1z" fill="#050505" stroke="#999"/><path d="M1.500 3.500h21v2.200h-21z" fill="#ddd"/><path d="M6 8.500H4v3h2M8 9v.7M8 11v.7M10 8.500l1.500 3M13.500 11.500h4" fill="none" stroke="#eee" stroke-width="1.100"/></svg><i></i></button>
    <button aria-label="Slack"><svg viewBox="0 0 24 24"><circle cx="12" cy="12" r="11.500" fill="#fff"/><g stroke-width="3" stroke-linecap="round"><path d="M10 5.500v4M5.500 9.700H10" stroke="#36c5f0"/><path d="M14.300 5.500v4.300M18.500 9.700h-.5" stroke="#2eb67d"/><path d="M14.300 14.200h4.200M14.300 18.500V18" stroke="#ecb22e"/><path d="M9.800 14.200v4.300M5.500 14.200H6" stroke="#e01e5a"/></g></svg><i></i></button>
  </div>
  <div class="ml-auto flex text-[11px] [&>button]:grid [&>button]:w-6 [&>button]:place-items-center">
    <button aria-label="Show hidden icons"><svg class="h-2 w-3.5" viewBox="0 0 14 8"><path d="M1 7.500l6-6 6 6" fill="none" stroke="#fff" stroke-width="1.400"/></svg></button>
    <button aria-label="Network"><svg class="size-3.5" viewBox="0 0 14 14"><g fill="none" stroke="#ddd" stroke-width="1.200"><path d="M1 13Q1.500 2 13 1.500M4 13q.5-8 9-8.500M7 13q.5-5 6-5.500M9.700 13q.3-2.300 3.300-2.500"/></g><circle cx="12.500" cy="12.500" r="1.300" fill="#fff"/></svg></button>
    <button aria-label="Battery"><svg class="h-3 w-4" viewBox="0 0 16 12"><path d="M5.500 2.500h9v7h-9V7M15.500 4.500v3M1 1v3h4V1M3 4v5.500h3M2 0v1.500M4 0v1.500" fill="none" stroke="#fff"/><path d="M7 4h6v4H7z" fill="#fff"/></svg></button>
    <button aria-label="Volume"><svg class="h-3.5 w-4" viewBox="0 0 16 14"><path d="M.7 5h2L6 2v10L2.700 9h-2z" fill="none" stroke="#fff"/><path d="M8 5q1.200 2 0 4" fill="none" stroke="#fff"/><path d="M10.300 3.300q2.200 3.700 0 7.400M12.700 1.700q3.200 5.300 0 10.600" fill="none" stroke="#9b8a8b"/></svg></button>
    <button class="w-[34px]!">ENG</button>
    <button class="w-[78px]! content-center leading-[18px]"><span>10.59</span><span>07/04/2020</span></button>
    <button aria-label="Notifications" class="mr-3.5 w-7!"><svg class="size-4" viewBox="0 0 16 16"><path d="M.5 1.500h15v11h-5L8 15l-2.500-2.500h-5z" fill="none" stroke="#fff"/></svg></button>
    <div class="mr-1 w-px bg-[#7b6365]"></div>
  </div>
</footer>
</body>
</html>
